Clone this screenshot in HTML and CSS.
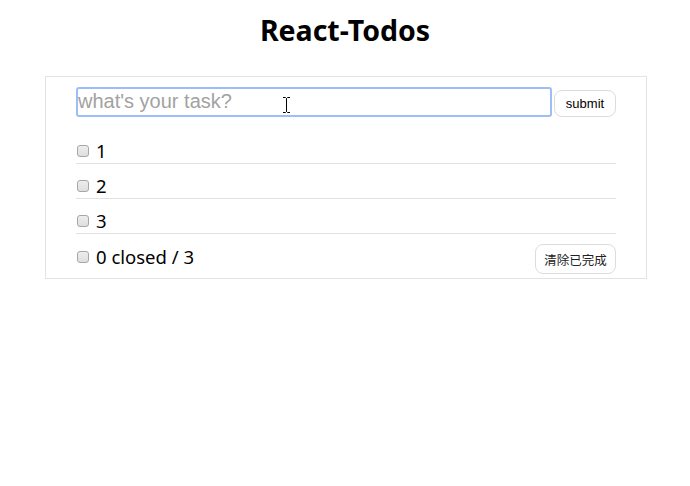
FILE: index.html
```
<!DOCTYPE html>
<html lang="zh">
<head>
<meta charset="utf-8">
<title>React-Todos</title>
<link rel="stylesheet" href="styles.css">
</head>
<body>
<h1 class="title">React-Todos</h1>
<div class="panel">
  <form class="add-form">
    <input class="task-input" type="text" placeholder="what's your task?">
    <button class="btn btn-submit" type="button">submit</button>
  </form>
  <ul class="todo-list">
    <li class="todo-item"><input class="check" type="checkbox"><span class="todo-text">1</span></li>
    <li class="todo-item"><input class="check" type="checkbox"><span class="todo-text">2</span></li>
    <li class="todo-item"><input class="check" type="checkbox"><span class="todo-text">3</span></li>
  </ul>
  <div class="footer">
    <label class="footer-left"><input class="check" type="checkbox"><span class="todo-text">0 closed / 3</span></label>
    <button class="btn btn-clear" type="button">清除已完成</button>
  </div>
  <svg class="ibeam" width="9" height="16" viewBox="0 0 9 16"><path d="M1 0.5h2.5l1 1 1-1h2.5M4.5 1.5v13M1 15.5h2.5l1-1 1 1h2.5" fill="none" stroke="#000" stroke-width="1"/></svg>
</div>
</body>
</html>
```
FILE: styles.css
```
html, body {
  margin: 0;
  padding: 0;
  background: #fff;
}
body {
  font-family: "Noto Sans", "Open Sans", "Noto Sans CJK SC", sans-serif;
  color: #000;
}
.title {
  margin: 0;
  padding-top: 11px;
  height: 76px;
  box-sizing: border-box;
  text-align: center;
  font-size: 28.5px;
  font-weight: 700;
  line-height: 38px;
}
.panel {
  position: relative;
  box-sizing: border-box;
  width: 602px;
  margin: 0 43px 0 45px;
  border: 1px solid #e3e3e3;
  padding: 10px 30px 4px 30px;
}
.add-form {
  display: flex;
  align-items: flex-end;
  gap: 2px;
  margin: 0;
}
.task-input {
  flex: 1;
  height: 30px;
  box-sizing: border-box;
  border: 2px solid #9dbdf6;
  border-radius: 3px;
  padding: 0 0 2px 0;
  font-family: "Liberation Sans", Arial, sans-serif;
  font-size: 20px;
  outline: none;
  color: #000;
}
.task-input::placeholder {
  color: #a2a2a2;
}
.btn {
  background: #fff;
  border: 1px solid #dcdcdc;
  border-radius: 8px;
  color: #000;
  cursor: pointer;
  padding: 0;
}
.btn-submit {
  width: 62px;
  height: 27px;
  font-family: "Liberation Sans", Arial, sans-serif;
  font-size: 13px;
}
.todo-list {
  list-style: none;
  margin: 12px 0 0 0;
  padding: 0;
}
.todo-item {
  display: flex;
  align-items: flex-end;
  height: 34px;
  border-bottom: 1px solid #e1e1e1;
}
.todo-text {
  font-size: 18.5px;
  line-height: 24px;
  padding-bottom: 0;
}
.check {
  appearance: none;
  -webkit-appearance: none;
  width: 12px;
  height: 12px;
  box-sizing: border-box;
  margin: 0 7px 6px 1px;
  border: 1px solid #a7a7a7;
  border-radius: 3px;
  background: linear-gradient(#ededed, #dedede);
  flex: none;
}
.footer {
  display: flex;
  align-items: center;
  justify-content: space-between;
  padding-top: 10px;
}
.footer-left {
  display: flex;
  align-items: center;
  padding-bottom: 5px;
}
.footer-left .check {
  margin-bottom: 0;
}
.btn-clear {
  width: 81px;
  height: 30px;
  font-family: "Noto Sans CJK SC", sans-serif;
  font-size: 12.5px;
  color: #222;
}
.ibeam {
  position: absolute;
  left: 236px;
  top: 20px;
}
```
